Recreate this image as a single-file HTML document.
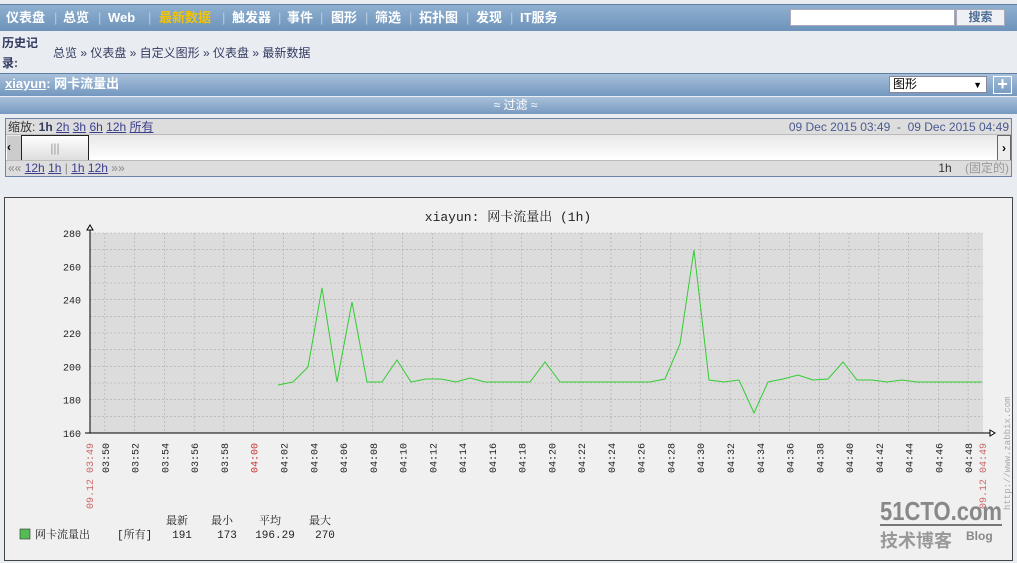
<!DOCTYPE html>
<html><head><meta charset="utf-8"><style>
*{margin:0;padding:0;box-sizing:border-box}
body{width:1017px;height:563px;background:#e9edf1;font-family:"Liberation Sans","Noto Sans CJK SC",sans-serif;font-size:12px;position:relative;overflow:hidden}
.nav{position:absolute;left:0;top:4px;width:1017px;height:27px;background:linear-gradient(#8fb0d0,#6d93bb);border-top:1px solid #5d7fa6}
.nav span{position:absolute;top:0;line-height:25px;color:#fff;font-weight:bold;font-size:13px}
.sep{color:#b8cbe0!important;font-weight:normal!important}
.search{position:absolute;left:790px;top:9px;width:165px;height:17px;background:#fff;border:1px solid #aab}
.sbtn{position:absolute;left:956px;top:9px;width:49px;height:17px;background:#eef0f3;border:1px solid #aab;color:#4a6a94;font-weight:bold;font-size:12px;text-align:center;line-height:15px}
.hist{position:absolute;left:2px;top:33px;color:#333a60;font-weight:bold;font-size:12px;line-height:20px}
.crumb{position:absolute;left:53px;top:44px;color:#333a60;font-size:12px}
.title{position:absolute;left:0;top:73px;width:1017px;height:23px;background:linear-gradient(#a8c0da,#7397bf);border-top:1px solid #5d7fa6}
.title b{position:absolute;left:5px;top:0;line-height:20px;color:#fff;font-size:13px}
.sel{position:absolute;left:889px;top:76px;width:98px;height:17px;background:#fff;border:1px solid #889;font-size:12px;padding-left:3px;line-height:15px}
.plus{position:absolute;left:993px;top:76px;width:19px;height:18px;border:1px solid #fff;color:#fff;font-size:18px;line-height:15px;text-align:center;font-weight:bold}
.filt{position:absolute;left:0;top:97px;width:1017px;height:17px;background:linear-gradient(#a8c0da,#7899c0);color:#fff;text-align:center;font-size:12px;line-height:17px;padding-left:14px}
.tb{position:absolute;left:5px;top:118px;width:1007px;height:59px;border:1px solid #6e83a8;background:#ddd}
.tb a{color:#3b3e8c;text-decoration:underline}
.gb{position:absolute;left:4px;top:197px;width:1009px;height:364px;border:1px solid #444;background:#f0f0f0}
</style></head><body>
<div class="nav">
<span style="left:6px">仪表盘</span><span class="sep" style="left:54px">|</span>
<span style="left:63px">总览</span><span class="sep" style="left:98px">|</span>
<span style="left:108px">Web</span><span class="sep" style="left:148px">|</span>
<span style="left:159px;color:#f5c400">最新数据</span><span class="sep" style="left:222px">|</span>
<span style="left:232px">触发器</span><span class="sep" style="left:278px">|</span>
<span style="left:287px">事件</span><span class="sep" style="left:320px">|</span>
<span style="left:331px">图形</span><span class="sep" style="left:365px">|</span>
<span style="left:375px">筛选</span><span class="sep" style="left:409px">|</span>
<span style="left:419px">拓扑图</span><span class="sep" style="left:466px">|</span>
<span style="left:476px">发现</span><span class="sep" style="left:510px">|</span>
<span style="left:520px">IT服务</span>
</div>
<div class="search"></div><div class="sbtn">搜索</div>
<div class="hist">历史记<br>录:</div>
<div class="crumb">总览 » 仪表盘 » 自定义图形 » 仪表盘 » 最新数据</div>
<div class="title"><b><u>xiayun</u>: 网卡流量出</b></div>
<div class="sel">图形<span style="position:absolute;right:4px;font-size:9px;top:1px">▼</span></div>
<div class="plus">+</div>
<div class="filt">≈ 过滤 ≈</div>
<div class="tb">
<div style="position:absolute;left:0;top:0;width:1005px;height:16px;background:#ddd;border-bottom:1px solid #bbb;padding-left:2px;line-height:16px;color:#333">缩放: <b style="color:#333a60">1h</b> <a>2h</a> <a>3h</a> <a>6h</a> <a>12h</a> <a>所有</a>
<span style="position:absolute;right:2px;color:#4a5a90;font-size:12px">09 Dec 2015 03:49 &nbsp;- &nbsp;09 Dec 2015 04:49</span></div>
<div style="position:absolute;left:0;top:16px;width:1005px;height:25px;background:linear-gradient(#e8e8e8,#fff)"></div>
<div style="position:absolute;left:1px;top:17px;width:14px;height:24px;background:#ccc;font-weight:bold;line-height:22px">‹</div>
<div style="position:absolute;left:15px;top:16px;width:68px;height:26px;border:1px solid #222;background:linear-gradient(#fff,#ddd);text-align:center;line-height:24px;color:#999">|||</div>
<div style="position:absolute;left:991px;top:16px;width:14px;height:26px;border:1px solid #666;background:#eee;font-weight:bold;line-height:24px;text-align:center">›</div>
<div style="position:absolute;left:0;top:41px;width:1005px;height:16px;background:#ddd;border-top:1px solid #bbb;padding-left:2px;line-height:15px;color:#888">«« <a>12h</a> <a>1h</a> | <a>1h</a> <a>12h</a> »»
<span style="position:absolute;right:2px;color:#333">1h &nbsp;&nbsp;&nbsp;<span style="color:#999">(固定的)</span></span></div>
</div>
<div class="gb"></div>
<svg id="g" style="position:absolute;left:0;top:0" width="1017" height="563" font-family="Liberation Mono,Noto Serif CJK SC,monospace"></svg>
<script>
var s='',X0=90,X1=983,Y0=233,Y1=433,pm=(X1-X0)/60;
s+='<rect x="'+X0+'" y="'+Y0+'" width="'+(X1-X0)+'" height="200" fill="#dcdcdc"/>';
for(var v=160;v<=280;v+=10){var y=433-(v-160)*200/120;if(v>160)s+='<line x1="'+X0+'" x2="'+X1+'" y1="'+y+'" y2="'+y+'" stroke="#aaa" stroke-dasharray="2,2" stroke-width="0.6"/>';if(v%20==0)s+='<text x="81" y="'+(y+4)+'" font-size="10" text-anchor="end" fill="#222">'+v+'</text>';}
for(var m=1;m<=60;m++){var x=X0+m*pm;if(m%2==1){s+='<line x1="'+x+'" x2="'+x+'" y1="'+Y0+'" y2="'+Y1+'" stroke="#aaa" stroke-dasharray="2,2" stroke-width="0.6"/>';var t=49+m,h=t>=60?'04':'03',mm=t%60;mm=(mm<10?'0':'')+mm;var red=(t==60);s+='<text transform="translate('+(x+4)+',443) rotate(-90)" font-size="10" text-anchor="end" fill="'+(red?'#c33':'#222')+'">'+h+':'+mm+'</text>';}}
s+='<text transform="translate(93,443) rotate(-90)" font-size="10" text-anchor="end" fill="#c66">09.12 03:49</text>';
s+='<text transform="translate(986,443) rotate(-90)" font-size="10" text-anchor="end" fill="#c66">09.12 04:49</text>';
s+='<text transform="translate(1010,510) rotate(-90)" font-size="9" fill="#aaa">http://www.zabbix.com</text>';
s+='<line x1="'+X0+'" x2="'+X0+'" y1="227" y2="'+Y1+'" stroke="#000"/><line x1="85" x2="992" y1="'+Y1+'" y2="'+Y1+'" stroke="#000"/>';
s+='<path d="M87 230 L90 225 L93 230Z" fill="#fff" stroke="#000"/><path d="M990 430 L995 433 L990 436Z" fill="#fff" stroke="#000"/>';
var p=[[278,385],[293,382],[308,367],[322,288],[337,382],[352,302],[367,382],[382,382],[397,360],[411,382],[426,379],[441,379],[456,382],[470,378],[485,382],[530,382],[545,362],[560,382],[650,382],[665,379],[680,344],[694,250],[709,380],[724,382],[739,380],[754,413],[768,382],[783,379],[798,375],[813,380],[828,379],[843,362],[857,380],[872,380],[887,382],[902,380],[917,382],[982,382]];
s+='<polyline fill="none" stroke="#3c3" stroke-width="1" points="'+p.map(function(a){return a.join(',')}).join(' ')+'"/>';
s+='<text x="508" y="221" font-size="13" text-anchor="middle" fill="#222">xiayun: 网卡流量出 (1h)</text>';
s+='<rect x="20" y="529" width="10" height="10" fill="#5b5" stroke="#333" stroke-width="0.6"/><text x="35" y="538" font-size="11" fill="#222">网卡流量出</text><text x="117" y="538" font-size="11" fill="#222">[所有]</text>';
[['最新',177,'191'],['最小',222,'173'],['平均',270,'196.29'],['最大',320,'270']].forEach(function(a){s+='<text x="'+a[1]+'" y="524" font-size="11" text-anchor="middle" fill="#222">'+a[0]+'</text><text x="'+(a[1]+5)+'" y="538" font-size="11" text-anchor="middle" fill="#222">'+a[2]+'</text>'});
s+='<text x="880" y="520" font-size="26" font-weight="bold" fill="#888" textLength="122" lengthAdjust="spacingAndGlyphs" font-family="Liberation Sans,sans-serif">51CTO.com</text><line x1="880" x2="1002" y1="525" y2="525" stroke="#777" stroke-width="2"/><text x="880" y="547" font-size="18" font-weight="bold" fill="#999" font-family="Noto Sans CJK SC,sans-serif">技术博客</text><text x="966" y="540" font-size="12" font-weight="bold" fill="#888" font-family="Liberation Sans,sans-serif">Blog</text>';
document.getElementById('g').innerHTML=s;
</script>
</body></html>
